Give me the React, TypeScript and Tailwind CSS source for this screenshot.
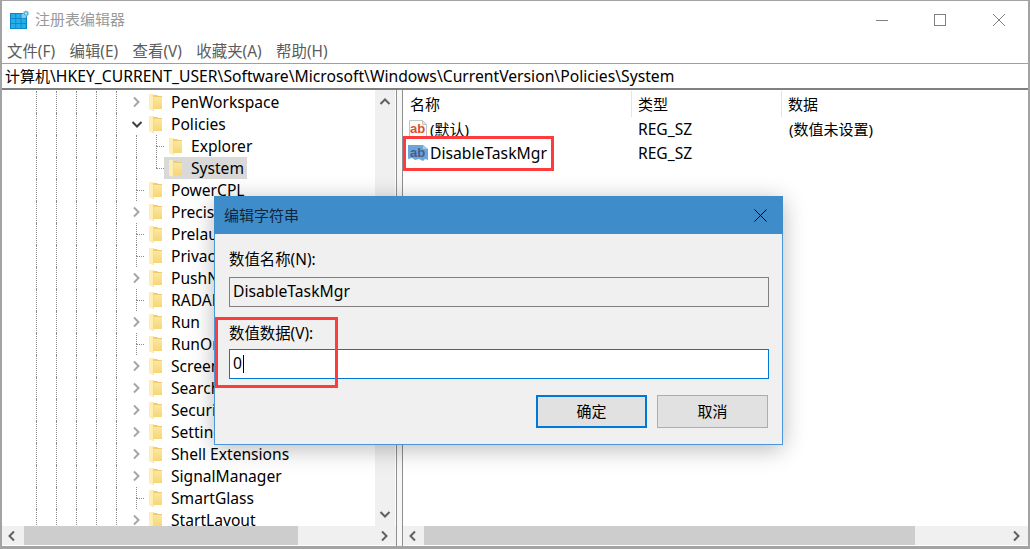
import React from "react";

const font = "font-['Noto_Sans','Noto_Sans_CJK_SC',sans-serif]";

function Chevron({ dir, className }: { dir: "left" | "right" | "up" | "down"; className: string }) {
  const d = {
    left: "M7 1.5 2.5 6 7 10.5",
    right: "M3 1.5 7.5 6 3 10.5",
    up: "M1.5 8 6 3.5 10.5 8",
    down: "M1.5 4 6 8.5 10.5 4",
  }[dir];
  return (
    <svg width="12" height="12" viewBox="0 0 12 12" fill="none" stroke="currentColor" strokeWidth="2" className={className}>
      <path d={d} />
    </svg>
  );
}

function Folder() {
  return (
    <svg width="13" height="17" viewBox="0 0 13 17" className="shrink-0">
      <defs>
        <linearGradient id="fold" x1="0" y1="0" x2="0" y2="1">
          <stop offset="0" stopColor="#fbe7a1" />
          <stop offset="1" stopColor="#f6d777" />
        </linearGradient>
      </defs>
      <path d="M3 1h5l1 1h4v13H3z" fill="#f0ca6c" />
      <path d="M4 3h9v12H4z" fill="url(#fold)" />
      <path d="M0 0h4.4v17L0 15.4z" fill="#ffeeb4" />
      <path d="M4.4 0v17" stroke="#eed08a" strokeWidth=".6" />
    </svg>
  );
}

function AppIcon() {
  return (
    <svg width="20" height="20" viewBox="0 0 20 20" className="shrink-0">
      <rect x="0" y="3" width="17" height="16" fill="#0a83c6" />
      {[0, 1, 2].map((r) =>
        [0, 1, 2].map((c) => (
          <rect key={`${r}-${c}`} x={1 + c * 5.2} y={4 + r * 5} width="4.4" height="4.2" fill={r === 0 && c === 2 ? "#7fcdf0" : "#27aee9"} />
        ))
      )}
      <circle cx="16" cy="3.5" r="2.6" fill="#4aa9c9" stroke="#9fd6e6" strokeWidth="1.2" strokeDasharray="1.4 .8" />
      <circle cx="16" cy="3.5" r="1" fill="#e8f6fb" />
    </svg>
  );
}

function StringIcon({ blue }: { blue?: boolean }) {
  if (blue) {
    return (
      <svg width="20" height="18" viewBox="0 0 20 18" className="shrink-0">
        <path d="M0 1h15l5 4v11l-3-1-2 2-4-2-4 1-3-2-4 1z" fill="#6aa5dc" />
        <path d="M15 1l5 4h-5z" fill="#a9cbe9" />
        <text x="9.5" y="12.5" textAnchor="middle" fontSize="13" fontWeight="700" fill="#4d5a85" fontFamily="Liberation Sans, sans-serif">ab</text>
      </svg>
    );
  }
  return (
    <svg width="20" height="18" viewBox="0 0 20 18" className="shrink-0">
      <path d="M1.5.5h13l4 4v13h-17z" fill="#fbfbfb" stroke="#c4c4c4" />
      <path d="M14.5.5l4 4h-4z" fill="#e4e4e4" stroke="#c4c4c4" />
      <text x="9.5" y="12.5" textAnchor="middle" fontSize="13" fontWeight="700" fill="#d9502e" fontFamily="Liberation Sans, sans-serif">ab</text>
    </svg>
  );
}

type Node = { name: string; kind: "closed" | "open" | "leaf"; depth?: number; last?: boolean; selected?: boolean };

const nodes: Node[] = [
  { name: "PenWorkspace", kind: "closed" },
  { name: "Policies", kind: "open" },
  { name: "Explorer", kind: "leaf", depth: 1 },
  { name: "System", kind: "leaf", depth: 1, last: true, selected: true },
  { name: "PowerCPL", kind: "leaf" },
  { name: "PrecisionTouchPad", kind: "closed" },
  { name: "Prelaunch", kind: "leaf" },
  { name: "Privacy", kind: "leaf" },
  { name: "PushNotifications", kind: "closed" },
  { name: "RADAR", kind: "leaf" },
  { name: "Run", kind: "closed" },
  { name: "RunOnce", kind: "leaf" },
  { name: "Screensavers", kind: "closed" },
  { name: "Search", kind: "closed" },
  { name: "Security and Maintenance", kind: "closed" },
  { name: "SettingSync", kind: "closed" },
  { name: "Shell Extensions", kind: "closed" },
  { name: "SignalManager", kind: "closed" },
  { name: "SmartGlass", kind: "leaf" },
  { name: "StartLayout", kind: "closed" },
];

const guide = "h-full w-5 shrink-0 border-l border-dotted border-[#8c8c8c]";

function TreeRow({ name, kind, depth = 0, last, selected }: Node) {
  return (
    <div className="flex h-[22px] items-center pl-[34px]">
      {[0, 1, 2, 3, 4].map((i) => (
        <div key={i} className={guide} />
      ))}
      {depth > 0 && <div className={guide} />}
      <div className="flex h-full w-2 shrink-0 items-center">
        {kind === "leaf" ? (
          <div className="flex h-full w-full flex-col">
            <div className="h-1/2 border-l border-dotted border-[#8c8c8c]" />
            <div className={`h-1/2 border-t border-dotted border-[#8c8c8c] ${last ? "" : "border-l"}`} />
          </div>
        ) : (
          <Chevron
            dir={kind === "open" ? "down" : "right"}
            className={`-ml-[5px] shrink-0 ${kind === "open" ? "text-[#3f3f3f]" : "text-[#a6a6a6]"}`}
          />
        )}
      </div>
      <div className={`flex h-full items-center whitespace-nowrap pl-[5px] pr-[3px] ${selected ? "bg-[#d9d9d9]" : ""}`}>
        <Folder />
        <span className="ml-[9px] pt-[2px] text-[15.6px]">{name}</span>
      </div>
    </div>
  );
}

function HScroll({ left, thumb, rest }: { left: string; thumb: string; rest: string }) {
  return (
    <div className="flex h-[19px] shrink-0 bg-[#f0f0f0]">
      <div className={`flex shrink-0 items-center justify-center ${left}`}>
        <Chevron dir="left" className="text-[#606060]" />
      </div>
      <div className={`shrink-0 bg-[#cdcdcd] ${thumb}`} />
      <div className={`flex items-center justify-end pr-[5px] ${rest}`}>
        <Chevron dir="right" className="text-[#606060]" />
      </div>
    </div>
  );
}

export default function App() {
  return (
    <div className={`relative flex h-[549px] w-[1030px] flex-col overflow-hidden bg-white text-[15px] leading-none text-black ${font}`}>
      <div className="flex min-h-0 flex-1 flex-col border-t border-l-2 border-r-2 border-b-[3px] border-[#a3a3a3]">
        {/* title bar */}
        <div className="flex h-[38px] shrink-0 items-center pb-px pl-2">
          <AppIcon />
          <span className="ml-[5px] text-[#999999]">注册表编辑器</span>
          <div className="ml-auto flex items-center text-[#808080]">
            <svg width="12" height="12" viewBox="0 0 12 12" className="mr-[46px]">
              <path d="M0 6.5h12" stroke="currentColor" />
            </svg>
            <svg width="12" height="12" viewBox="0 0 12 12" className="mr-[47px]">
              <rect x=".5" y=".5" width="11" height="11" fill="none" stroke="currentColor" />
            </svg>
            <svg width="12" height="12" viewBox="0 0 12 12" className="mr-[23px]">
              <path d="M0 0l12 12M12 0L0 12" stroke="currentColor" />
            </svg>
          </div>
        </div>
        {/* menu */}
        <div className="flex h-6 shrink-0 items-center gap-[14.5px] pt-[2px] pl-[5px] text-[15.4px] text-[#5c5c5c]">
          <span>文件(F)</span>
          <span>编辑(E)</span>
          <span>查看(V)</span>
          <span>收藏夹(A)</span>
          <span>帮助(H)</span>
        </div>
        {/* address */}
        <div className="flex h-[27px] shrink-0 items-center whitespace-nowrap border-t border-b-2 border-t-[#a0a0a0] border-b-[#808080] pl-[3px]">
          计算机<span className="pt-[2px] text-[15.7px]">\HKEY_CURRENT_USER\Software\Microsoft\Windows\CurrentVersion\Policies\System</span>
        </div>
        {/* panes */}
        <div className="flex min-h-0 flex-1">
          <div className="flex w-[394px] shrink-0 flex-col pb-px">
            <div className="flex min-h-0 flex-1 pr-px">
              <div className="min-w-0 flex-1 overflow-hidden pt-px">
                {nodes.map((n) => (
                  <TreeRow key={n.name} {...n} />
                ))}
              </div>
              <div className="flex w-5 shrink-0 flex-col items-center justify-between bg-[#f0f0f0] py-1.5">
                <Chevron dir="up" className="text-[#606060]" />
                <Chevron dir="down" className="text-[#606060]" />
              </div>
            </div>
            <HScroll left="w-[22px]" thumb="w-[274px]" rest="flex-1" />
          </div>
          <div className="w-[7px] shrink-0 border-x border-[#8f8f8f] bg-[#f7f7f7]" />
          <div className="flex min-w-0 flex-1 flex-col pb-px">
            <div className="min-h-0 flex-1">
              <div className="flex h-[27px] items-center pt-px">
                <div className="flex h-full w-[229px] shrink-0 items-center border-r border-[#e5e5e5] pl-[7px]">名称</div>
                <div className="flex h-full w-[150px] shrink-0 items-center border-r border-[#e5e5e5] pl-[6px]">类型</div>
                <div className="pl-[6px]">数据</div>
              </div>
              <div className="flex h-6 items-center">
                <div className="flex w-[229px] shrink-0 items-center pl-[5px]">
                  <StringIcon />
                  <span className="ml-[2px]">(默认)</span>
                </div>
                <div className="w-[150px] shrink-0 pl-[6px] pt-[2px] text-[15.6px]">REG_SZ</div>
                <div className="pl-[7px]">(数值未设置)</div>
              </div>
              <div className="flex h-6 items-center">
                <div className="flex w-[229px] shrink-0 items-center pl-[5px]">
                  <StringIcon blue />
                  <span className="ml-[2px] pt-[2px] text-[15.7px]">DisableTaskMgr</span>
                </div>
                <div className="w-[150px] shrink-0 pl-[6px] pt-[2px] text-[15.6px]">REG_SZ</div>
              </div>
            </div>
            <HScroll left="w-[21px]" thumb="w-[491px]" rest="flex-1" />
          </div>
        </div>
      </div>

      {/* edit string dialog */}
      <div className="absolute left-[214px] top-[196px] flex h-[249px] w-[569px] flex-col border border-t-0 border-[#4a96d8] bg-[#f0f0f0] shadow-[0_4px_22px_rgba(0,0,0,0.28)]">
        <div className="-mx-px flex h-[38px] shrink-0 items-center justify-between bg-[#3f8ccb] pl-[10px] pr-[16px] text-[#10253a]">
          <span>编辑字符串</span>
          <svg width="13" height="13" viewBox="0 0 13 13">
            <path d="M.5.5l12 12M12.5.5l-12 12" stroke="#000" />
          </svg>
        </div>
        <div className="flex flex-1 flex-col px-[14px] pt-[18px]">
          <div className="h-[18px] text-[15.4px]">数值名称(N):</div>
          <div className="mt-[7px] flex h-[30px] w-[540px] items-center border border-[#7f7f7f] pl-[3px] text-[15.7px]">DisableTaskMgr</div>
          <div className="mt-[19px] h-[18px] text-[15.4px]">数值数据(V):</div>
          <div className="mt-[5px] flex h-[30px] w-[540px] items-center border border-[#0078d7] bg-white pl-[3px] text-[15.7px]">
            <span>0</span>
            <span className="ml-px h-[18px] w-px bg-black" />
          </div>
          <div className="mt-4 flex w-[539px] justify-end gap-[10px]">
            <div className="flex h-[33px] w-[111px] items-center justify-center border-2 border-[#0078d7] bg-[#e1e1e1]">确定</div>
            <div className="flex h-[33px] w-[111px] items-center justify-center border border-[#adadad] bg-[#e1e1e1]">取消</div>
          </div>
        </div>
      </div>

      {/* red annotations */}
      <div className="absolute left-[403px] top-[136px] h-[35px] w-[151px] border-[3px] border-[#ff3b3b]" />
      <div className="absolute left-[215px] top-[317px] h-[71px] w-[123px] border-[3px] border-[#ff3b3b]" />
    </div>
  );
}
